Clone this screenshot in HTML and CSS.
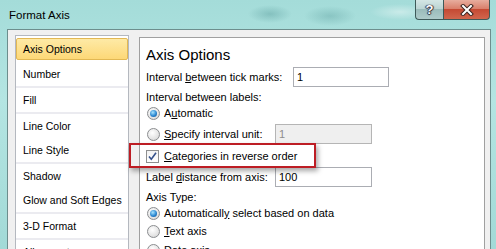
FILE: index.html
```html
<!DOCTYPE html>
<html lang="en">
<head>
  <meta charset="UTF-8">
  <meta name="viewport" content="width=device-width, initial-scale=1.0">
  <title>Format Axis</title>
  <link rel="stylesheet" href="styles.css">
</head>
<body>
  <div class="window">
    <div class="titlebar">
      <span class="title">Format Axis</span>
      <div class="caption-btns">
        <span class="cbtn help">?</span>
        <span class="cbtn close">
          <svg width="14" height="12" viewBox="0 0 14 12">
            <path d="M3 2 L11 10 M11 2 L3 10" stroke="#3a2420" stroke-width="4" stroke-linecap="square"/>
            <path d="M3 2 L11 10 M11 2 L3 10" stroke="#fff" stroke-width="2" stroke-linecap="square"/>
          </svg>
        </span>
      </div>
    </div>

    <div class="client">
      <!-- category list -->
      <ul class="nav">
        <li class="active">Axis Options</li>
        <li class="sep">Number</li>
        <li class="sep">Fill</li>
        <li>Line Color</li>
        <li class="sep">Line Style</li>
        <li>Shadow</li>
        <li class="sep">Glow and Soft Edges</li>
        <li class="sep">3-D Format</li>
        <li>Alignment</li>
      </ul>

      <!-- options page -->
      <div class="panel">
        <h2>Axis Options</h2>
        <div class="row r-tick">
          <span class="lbl lbl-wide">Interval <u>b</u>etween tick marks:</span>
          <input class="field field-tick" type="text" value="1" readonly>
        </div>
        <div class="row r-caption">Interval between labels:</div>
        <div class="row r-auto">
          <span class="radio on"></span><span>A<u>u</u>tomatic</span>
        </div>
        <div class="row r-specify">
          <span class="radio"></span><span class="lbl lbl-opt"><u>S</u>pecify interval unit:</span>
          <input class="field off" type="text" value="1" disabled>
        </div>
        <div class="row r-reverse">
          <span class="check">
            <svg width="11" height="11" viewBox="0 0 11 11"><path d="M2 5.5 L4.3 8.3 L9 1.8" fill="none" stroke="#34508a" stroke-width="1.6"/></svg>
          </span>
          <span><u>C</u>ategories in reverse order</span>
        </div>
        <div class="row r-distance">
          <span class="lbl lbl-std">Label <u>d</u>istance from axis:</span>
          <input class="field" type="text" value="100" readonly>
        </div>
        <div class="row r-caption r-type">Axis Type:</div>
        <div class="row r-auto">
          <span class="radio on"></span><span>Automaticall<u>y</u> select based on data</span>
        </div>
        <div class="row r-text">
          <span class="radio"></span><span><u>T</u>ext axis</span>
        </div>
        <div class="row r-date">
          <span class="radio"></span><span>D<u>a</u>te axis</span>
        </div>
      </div>
    </div>

    <div class="callout"></div>
  </div>
</body>
</html>
```

FILE: styles.css
```css
* { box-sizing: border-box; }
body { margin: 0; width: 496px; height: 249px; overflow: hidden; font-family: "Liberation Sans", Arial, sans-serif; font-size: 11px; color: #000; }

.window { position: relative; height: 249px; background:
  radial-gradient(ellipse 22px 9px at 270px 14px, rgba(70,140,140,.35), transparent),
  radial-gradient(ellipse 26px 10px at 330px 16px, rgba(70,140,140,.3), transparent),
  radial-gradient(ellipse 30px 8px at 400px 12px, rgba(255,255,255,.4), transparent),
  linear-gradient(180deg, #a4dcd9 0%, #b4e5e2 40%, #a2dad7 100%); }

.titlebar { height: 29px; display: flex; justify-content: space-between; align-items: flex-start; padding: 0 6px 0 9px; }
.title { padding-top: 9px; font-size: 11.5px; line-height: 13px; }
.caption-btns { display: flex; }
.cbtn { height: 20px; display: flex; align-items: center; justify-content: center; border: 1px solid #3e5a59; border-top: none; }
.help { width: 28px; border-right: none; border-radius: 0 0 0 4px; background: linear-gradient(#d4e6e5, #bcd5d4 45%, #9bbcbb 50%, #aecbca); color: #fff; font-weight: bold; font-size: 13px; text-shadow: 0 0 1px #223, 1px 0 1px #334, -1px 0 1px #334, 0 1px 1px #334; }
.close { width: 47px; border-radius: 0 0 4px 0; background: linear-gradient(#e7ad9e, #d9806c 45%, #c54a34 50%, #d1664d); }

.client { display: flex; align-items: flex-start; gap: 10px; height: 230px; margin: 0 5px 0 7px; padding: 5px 5px 0 7px; background: #f0f0f0; border: 1px solid #6d8e8d; border-bottom: none; }

.nav { list-style: none; margin: 0; padding: 2px 0 0; width: 114px; height: 240px; background: #fff; border: 1px solid #b4b8bf; font-size: 10.5px; }
.nav li { height: 24px; line-height: 24px; padding-left: 7px; white-space: nowrap; }
.nav li.sep { height: 26px; border-bottom: 2px solid #ebebf0; }
.nav li.active { height: 22px; line-height: 20px; padding-left: 6px; margin-bottom: 2px; border: 1px solid #e2b853; border-radius: 2px; background: linear-gradient(#feeaa6, #fdd877); }

.panel { width: 346px; height: 230px; margin-top: 2px; padding-left: 6px; background: #fff; border: 1px solid #a0a0a0; }
.panel h2 { margin: 0; padding-top: 8px; font-size: 15px; line-height: 18px; font-weight: normal; }

.row { display: flex; align-items: center; height: 20px; white-space: nowrap; }
.r-tick { margin-top: 3px; }
.r-caption { height: 18px; margin-top: 1px; }
.r-auto { height: 14px; }
.r-specify { margin-top: 4px; }
.r-reverse { margin-top: 2px; }
.r-distance { margin-top: 1px; }
.r-text { height: 18px; margin-top: 2px; }
.r-date { height: 18px; margin-top: 1px; }

.lbl-wide { width: 147px; }
.lbl-opt { width: 111px; }
.lbl-std { width: 129px; }

.field { width: 97px; height: 20px; margin: 0; padding: 0 3px; border: 1px solid #abadb3; font: inherit; color: #000; background: #fff; outline: none; }
.field-tick { width: 96px; }
.field.off { background: #efefef; color: #8d8d8d; border-color: #b5b5b5; }

.radio { flex: none; width: 13px; height: 13px; margin: 0 4px 0 1px; border-radius: 50%; border: 1px solid #8b8d90; background: radial-gradient(circle at 40% 35%, #fff, #e2e2e2 65%, #c9c9c9); display: flex; align-items: center; justify-content: center; }
.radio.on::after { content: ""; width: 7px; height: 7px; border-radius: 50%; background: radial-gradient(circle at 40% 35%, #a8e4ff, #2b88d2 55%, #0d4c8c); }

.check { flex: none; width: 13px; height: 13px; margin-right: 5px; border: 1px solid #8e8f8f; background: linear-gradient(#f2f2f2, #fff); display: flex; align-items: center; justify-content: center; }

.callout { position: absolute; left: 129px; top: 143px; width: 187px; height: 25px; border: 2px solid #bd1d24; box-shadow: 2px 3px 5px rgba(0,0,0,.35); }
```
